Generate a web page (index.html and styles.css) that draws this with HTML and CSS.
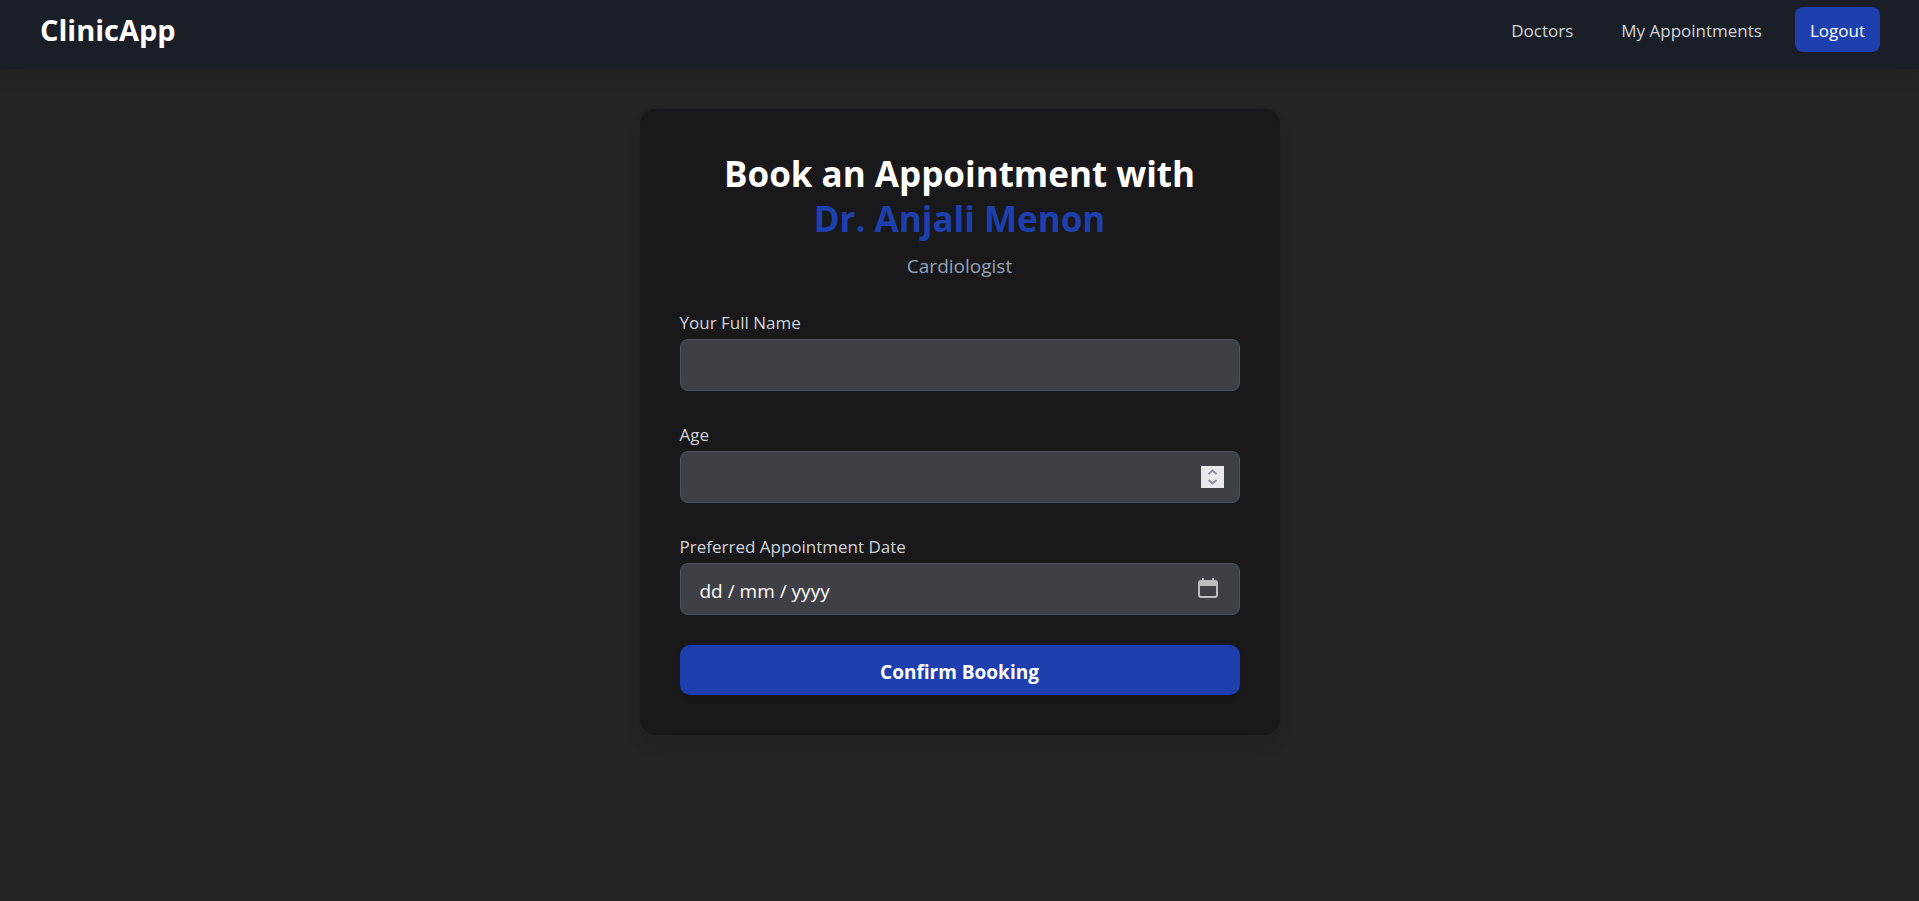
FILE: index.html
```html
<!DOCTYPE html>
<html lang="en-GB">
<head>
  <meta charset="utf-8">
  <meta name="viewport" content="width=device-width, initial-scale=1">
  <title>ClinicApp</title>
  <link rel="stylesheet" href="styles.css">
</head>
<body>
  <header class="navbar">
    <a class="brand" href="#">ClinicApp</a>
    <nav class="nav-links">
      <a class="nav-link" href="#">Doctors</a>
      <a class="nav-link" href="#">My Appointments</a>
      <button class="logout" type="button">Logout</button>
    </nav>
  </header>

  <main class="page">
    <section class="card">
      <h1 class="title">Book an Appointment with <span class="doctor">Dr. Anjali Menon</span></h1>
      <p class="specialty">Cardiologist</p>

      <form class="form">
        <div class="field">
          <label class="label" for="name">Your Full Name</label>
          <input class="input" id="name" type="text">
        </div>

        <div class="field">
          <label class="label" for="age">Age</label>
          <div class="control">
            <input class="input" id="age" type="number">
            <svg class="spinner" viewBox="0 0 23 22" aria-hidden="true">
              <path d="M7.500 8 11.500 4.500 15.500 8M7.500 14 11.500 17.500 15.500 14"/>
            </svg>
          </div>
        </div>

        <div class="field">
          <label class="label" for="date">Preferred Appointment Date</label>
          <div class="control">
            <input class="input" id="date" type="text" placeholder="dd / mm / yyyy">
            <button class="picker" type="button" aria-label="Show date picker">
              <svg class="calendar" viewBox="0 0 20 20" aria-hidden="true">
                <path fill-rule="evenodd" d="M4 0h2v2h8V0h2v2h1a3 3 0 0 1 3 3v12a3 3 0 0 1-3 3H3a3 3 0 0 1-3-3V5a3 3 0 0 1 3-3h1zM2 8v9a1 1 0 0 0 1 1h14a1 1 0 0 0 1-1V8z"/>
              </svg>
            </button>
          </div>
        </div>

        <button class="submit" type="submit">Confirm Booking</button>
      </form>
    </section>
  </main>
</body>
</html>
```
FILE: styles.css
```css
* {
  box-sizing: border-box;
}

body {
  margin: 0;
  min-height: 100vh;
  background: #242424;
  color: #fff;
  font-family: "Open Sans", "Noto Sans", sans-serif;
  font-size: 17px;
  line-height: 27px;
}

button,
input {
  font: inherit;
}

.navbar {
  display: flex;
  justify-content: space-between;
  align-items: center;
  padding: 7px 39px 17px 40px;
  background: #1a1e26;
  box-shadow: 0 10px 20px -4px rgba(0, 0, 0, 0.12);
}

.brand {
  color: #fff;
  font-size: 29px;
  font-weight: 700;
  line-height: 45px;
  text-decoration: none;
}

.nav-links {
  display: flex;
  align-items: center;
  gap: 18px;
}

.nav-link {
  padding: 10px 15px 8px;
  color: #d1d5db;
  text-decoration: none;
}

.logout {
  padding: 10px 15px 8px;
  border: 0;
  border-radius: 8px;
  background: #1e40af;
  color: #fff;
}

.page {
  padding: 40px 20px;
}

.card {
  max-width: 640px;
  margin: 0 auto;
  padding: 42px 40px 40px;
  border-radius: 16px;
  background: #19191b;
  box-shadow: 0 10px 20px -4px rgba(0, 0, 0, 0.12);
}

.title {
  margin: 0;
  font-size: 35px;
  font-weight: 700;
  line-height: 45px;
  text-align: center;
}

.doctor {
  display: block;
  color: #1e40af;
}

.specialty {
  margin: 10px 0 28px;
  color: #94a3b8;
  font-size: 19px;
  line-height: 30px;
  text-align: center;
}

.form {
  display: flex;
  flex-direction: column;
  gap: 30px;
}

.field {
  display: flex;
  flex-direction: column;
  gap: 3px;
}

.label {
  color: #d1d5db;
}

.control {
  position: relative;
  display: flex;
}

.input {
  width: 100%;
  padding: 13px 19px 9px;
  border: 1px solid #475569;
  border-radius: 8px;
  outline: 0;
  background: #3f4045;
  color: #fff;
  font-size: 19px;
  line-height: 28px;
  height: 52px;
  appearance: textfield;
}

.input::placeholder {
  color: #fff;
  opacity: 1;
}

.input::-webkit-inner-spin-button {
  appearance: none;
}

.spinner {
  position: absolute;
  top: 15px;
  right: 16px;
  width: 23px;
  height: 22px;
  background: #e9e8ed;
  fill: none;
  stroke: #8f8f9d;
  stroke-width: 2;
  pointer-events: none;
}

.picker {
  position: absolute;
  top: 15px;
  right: 22px;
  display: flex;
  padding: 0;
  border: 0;
  background: none;
}

.calendar {
  width: 20px;
  height: 20px;
  fill: #bdbdbf;
}

.submit {
  padding: 13px 20px 9px;
  border: 0;
  border-radius: 10px;
  background: #1e40af;
  box-shadow: 0 4px 6px rgba(0, 0, 0, 0.12);
  color: #fff;
  font-size: 19px;
  font-weight: 700;
  line-height: 28px;
}
```
